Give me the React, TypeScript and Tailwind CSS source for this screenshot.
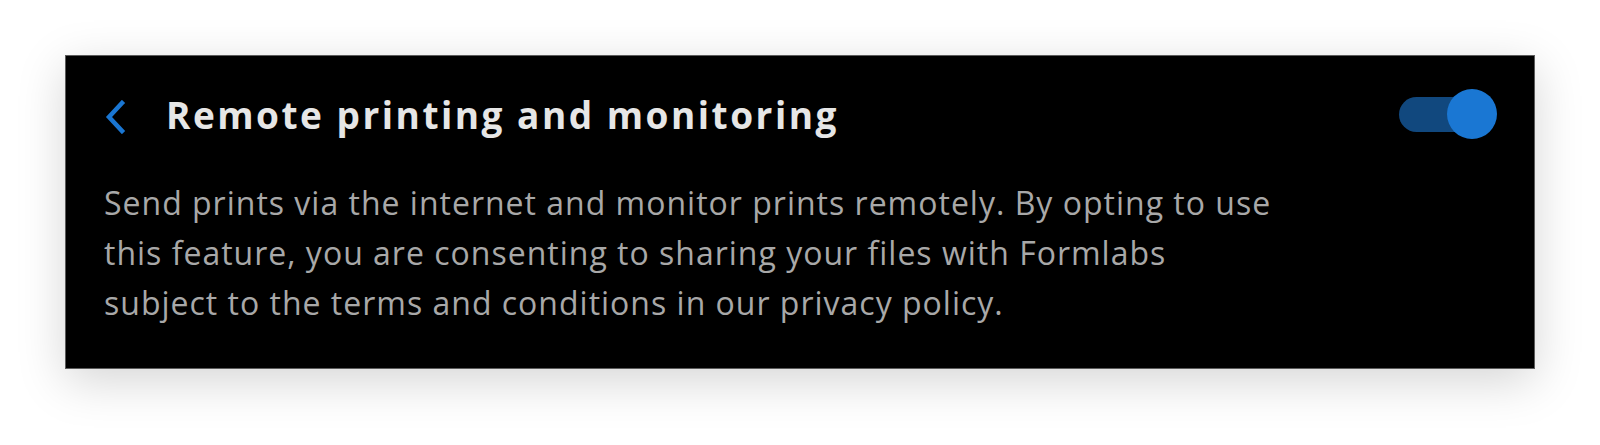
import { useState } from "react";

function BackChevron() {
  return (
    <svg width="22" height="34" viewBox="0 0 22 34" fill="none" className="shrink-0">
      <path d="M18 3 L5 17 L18 31" stroke="#1a76d2" strokeWidth="4.5" strokeLinecap="square" />
    </svg>
  );
}

function Toggle({ on, onChange }: { on: boolean; onChange: (v: boolean) => void }) {
  return (
    <button
      type="button"
      onClick={() => onChange(!on)}
      className="relative h-[50px] w-[98px] shrink-0"
      aria-pressed={on}
    >
      <span className="absolute left-0 top-[8px] h-[35px] w-[90px] rounded-full bg-[#11487e]" />
      <span
        className={
          on
            ? "absolute right-0 top-0 h-[50px] w-[50px] rounded-full bg-[#1a77d3]"
            : "absolute left-0 top-0 h-[50px] w-[50px] rounded-full bg-[#9a9a9a]"
        }
      />
    </button>
  );
}

export default function App() {
  const [enabled, setEnabled] = useState(true);

  return (
    <div className="h-[445px] w-full bg-white pl-[65px] pt-[55px] font-['Open_Sans',sans-serif]">
      <section className="h-[314px] w-[1470px] border border-[#5c5c5c] bg-black pl-[38px] pr-[37px] pt-[36px] shadow-[0_12px_45px_rgba(0,0,0,0.17)]">
        <div className="flex h-[50px] items-center">
          <BackChevron />
          <h1 className="ml-[40px] -mt-[4px] text-[37px] font-bold leading-[50px] tracking-[2.5px] text-[#e6e6e6]">
            Remote printing and monitoring
          </h1>
          <div className="ml-auto">
            <Toggle on={enabled} onChange={setEnabled} />
          </div>
        </div>
        <p className="mt-[36px] text-[32px] leading-[50px] tracking-[1px] text-[#a8a8a8]">
          Send prints via the internet and monitor prints remotely. By opting to use
          <br />
          this feature, you are consenting to sharing your files with Formlabs
          <br />
          subject to the terms and conditions in our privacy policy.
        </p>
      </section>
    </div>
  );
}
